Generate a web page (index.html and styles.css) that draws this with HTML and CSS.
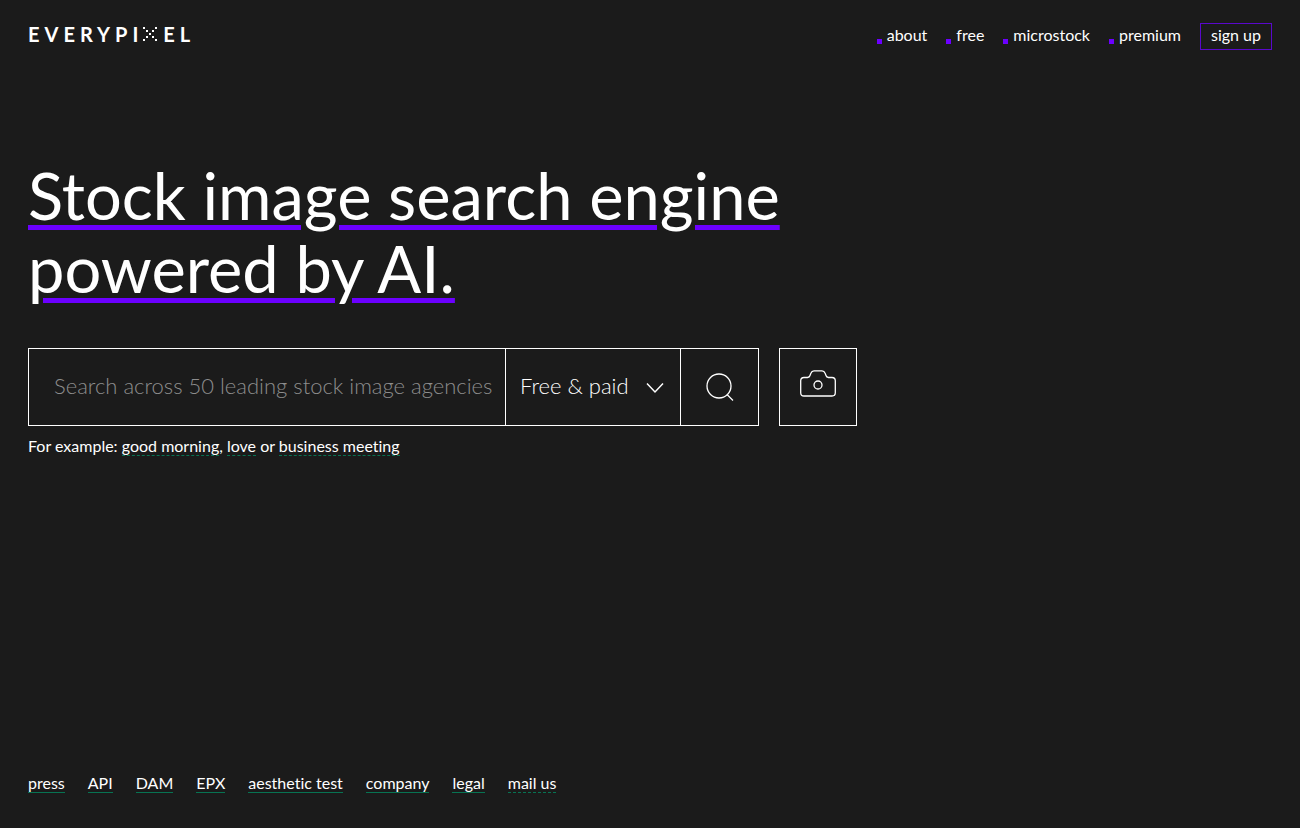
FILE: index.html
```html
<!DOCTYPE html>
<html lang="en">
  <head>
    <meta charset="UTF-8" />
    <meta name="viewport" content="width=device-width, initial-scale=1.0" />
    <title>Everypixel</title>
    <link rel="stylesheet" href="styles.css">
  </head>
  <body>
    <header class="header">
      <a class="logo" href="#" aria-label="Everypixel">
        <span>EVERYPI</span>
        <svg class="logo-x" viewBox="0 0 14 14" aria-hidden="true">
          <path d="M0 0h2v2H0zM12 0h2v2h-2zM3 3h2v2H3zM9 3h2v2H9zM6 6h2v2H6zM3 9h2v2H3zM9 9h2v2H9zM0 12h2v2H0zM12 12h2v2h-2z" />
        </svg>
        <span>EL</span>
      </a>
      <nav class="nav">
        <a class="nav-link" href="#">about</a>
        <a class="nav-link" href="#">free</a>
        <a class="nav-link" href="#">microstock</a>
        <a class="nav-link" href="#">premium</a>
        <button class="signup" type="button">sign up</button>
      </nav>
    </header>

    <main>
      <h1>Stock image search engine<br />powered by AI.</h1>
      <form class="search">
        <div class="search-bar">
          <input class="search-input" type="text" aria-label="Search" placeholder="Search across 50 leading stock image agencies" />
          <div class="price">
            <select aria-label="Price">
              <option>Free &amp; paid</option>
              <option>Free</option>
              <option>Paid</option>
            </select>
            <svg class="arrow" viewBox="0 0 18 12" aria-hidden="true">
              <path d="M1 1.500l8 8.500 8-8.500" />
            </svg>
          </div>
          <button class="search-button" type="submit" aria-label="Find">
            <svg width="28" height="28" viewBox="0 0 28 28">
              <circle cx="13" cy="13" r="12" />
              <path d="M21 21.500l6 6" />
            </svg>
          </button>
        </div>
        <button class="camera-button" type="button" aria-label="Search by image">
          <svg width="36" height="28" viewBox="0 0 36 28">
            <path d="M4 7.500h3.500q2-.2 2.500-2l1-2.500q.8-2.200 3-2.200h8q2.200 0 3 2.200l1 2.500q.5 1.800 2.500 2H32q3.300 0 3.300 3.300v12q0 3.200-3.300 3.200H4q-3.300 0-3.300-3.200v-12Q.7 7.500 4 7.500z" />
            <circle cx="18" cy="15" r="4" />
          </svg>
        </button>
      </form>
      <p class="example">For example: <a href="#">good morning</a>, <a href="#">love</a> or <a href="#">business meeting</a></p>
    </main>

    <footer class="footer">
      <a href="#">press</a>
      <a href="#">API</a>
      <a href="#">DAM</a>
      <a href="#">EPX</a>
      <a href="#">aesthetic test</a>
      <a href="#">company</a>
      <a href="#">legal</a>
      <a class="dashed" href="#">mail us</a>
    </footer>
  </body>
</html>
```
FILE: styles.css
```css
* {
  box-sizing: border-box;
}
body {
  display: flex;
  flex-direction: column;
  min-height: 100vh;
  margin: 0;
  padding: 22px 28px 35px;
  background: #1b1b1b;
  color: #fff;
  font-family: Lato, sans-serif;
  font-size: 16px;
  line-height: 20px;
  font-variant-ligatures: none;
}
a {
  color: #fff;
  text-decoration: none;
}
button,
input,
select {
  margin: 0;
  border: 0;
  border-radius: 0;
  background: none;
  color: #fff;
  font: inherit;
}
button {
  cursor: pointer;
}
svg {
  display: block;
  fill: none;
  stroke: #fff;
}

.header {
  display: flex;
  justify-content: space-between;
  align-items: center;
  height: 28px;
}
.logo {
  display: flex;
  align-items: center;
  margin-bottom: 4px;
  font-size: 20px;
  font-weight: 700;
  letter-spacing: 5px;
}
.logo-x {
  width: 14px;
  height: 14px;
  margin-right: 6px;
  fill: #fff;
  stroke: none;
}
.nav {
  display: flex;
  align-items: center;
  gap: 19px;
}
.nav-link {
  padding-bottom: 2px;
}
.nav-link::before {
  content: "";
  display: inline-block;
  width: 5px;
  height: 5px;
  margin-right: 5px;
  background: #6c00ff;
  vertical-align: -3px;
}
.signup {
  height: 27px;
  padding: 0 10px 2px;
  border: 1px solid #5a08cc;
}

h1 {
  margin: 109px 0 43px;
  font-size: 65px;
  font-weight: 400;
  line-height: 73px;
  text-decoration: underline;
  text-decoration-color: #6c00ff;
  text-decoration-thickness: 5px;
  text-underline-offset: 5px;
}

.search {
  display: flex;
  gap: 20px;
}
.search-bar {
  display: flex;
  flex: 0 1 731px;
  height: 78px;
  border: 1px solid #fff;
}
.search-input {
  flex: 1;
  min-width: 0;
  padding: 0 0 4px 25px;
  font-size: 22px;
  font-weight: 300;
  outline: none;
}
.search-input::placeholder {
  color: #8d8d8d;
}
.price {
  position: relative;
  width: 175px;
  border-left: 1px solid #fff;
}
.price select {
  width: 100%;
  height: 100%;
  padding: 0 44px 3px 14px;
  font-size: 22px;
  font-weight: 300;
  line-height: 30px;
  appearance: none;
}
.price option {
  background: #1b1b1b;
}
.arrow {
  position: absolute;
  top: 33px;
  right: 16px;
  width: 18px;
  height: 12px;
  stroke-width: 1.5;
  pointer-events: none;
}
.search-button,
.camera-button {
  display: flex;
  flex: none;
  justify-content: center;
  align-items: center;
  width: 78px;
  padding: 0;
}
.search-button {
  border-left: 1px solid #fff;
}
.search-button svg,
.camera-button svg {
  stroke-width: 1.3;
}
.camera-button {
  height: 78px;
  padding-bottom: 6px;
  border: 1px solid #fff;
}

.example {
  margin: 10px 0 40px;
}
.example a,
.footer a {
  display: inline-block;
  line-height: 19px;
  border-bottom: 1px solid #077352;
}
.example a,
.footer .dashed {
  border-bottom-style: dashed;
}

.footer {
  display: flex;
  flex-wrap: wrap;
  gap: 23px;
  margin-top: auto;
}
```
